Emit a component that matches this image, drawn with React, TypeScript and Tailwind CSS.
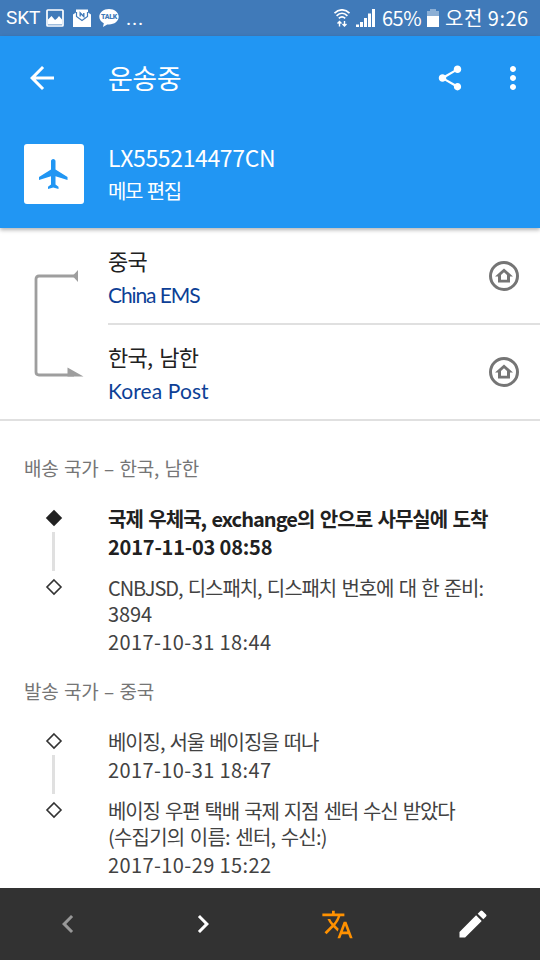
import React from 'react';
import {
  MdArrowBack,
  MdChevronLeft,
  MdChevronRight,
  MdEdit,
  MdFlight,
  MdMoreVert,
  MdShare,
  MdTranslate,
} from 'react-icons/md';

interface Line {
  text: string;
  tracking: string;
}

interface TrackEvent {
  id: number;
  lines: Line[];
  date: string;
  latest?: boolean;
}

interface Section {
  id: number;
  title: string;
  events: TrackEvent[];
}

const sections: Section[] = [
  {
    id: 1,
    title: '배송 국가 – 한국, 남한',
    events: [
      {
        id: 1,
        lines: [{ text: '국제 우체국, exchange의 안으로 사무실에 도착', tracking: 'tracking-[-0.96px]' }],
        date: '2017-11-03 08:58',
        latest: true,
      },
      {
        id: 2,
        lines: [
          { text: 'CNBJSD, 디스패치, 디스패치 번호에 대 한 준비:', tracking: 'tracking-[-1.06px]' },
          { text: '3894', tracking: 'tracking-[-0.1px]' },
        ],
        date: '2017-10-31 18:44',
      },
    ],
  },
  {
    id: 2,
    title: '발송 국가 – 중국',
    events: [
      {
        id: 3,
        lines: [{ text: '베이징, 서울 베이징을 떠나', tracking: 'tracking-[-1.1px]' }],
        date: '2017-10-31 18:47',
      },
      {
        id: 4,
        lines: [
          { text: '베이징 우편 택배 국제 지점 센터 수신 받았다', tracking: 'tracking-[-1.15px]' },
          { text: '(수집기의 이름: 센터, 수신:)', tracking: 'tracking-[-0.8px]' },
        ],
        date: '2017-10-29 15:22',
      },
    ],
  },
];

const countries = [
  { id: 1, name: '중국', carrier: 'China EMS', height: 'h-[97px] border-b-2', tracking: 'tracking-[-1.1px]' },
  { id: 2, name: '한국, 남한', carrier: 'Korea Post', height: 'h-[94px]', tracking: 'tracking-[0.1px]' },
];

const StatusBar: React.FC = () => (
  <div className="flex h-9 shrink-0 items-center justify-between bg-[#407ab9] pl-1.5 pr-3 text-white">
    <div className="flex items-center">
      <span className="w-[40px] whitespace-nowrap font-['Roboto',sans-serif] text-[19px] leading-9 tracking-[-0.1px]">SKT</span>
      <svg width="18" height="18" viewBox="0 0 18 18" fill="none">
        <rect x="1" y="1" width="16" height="16" rx="0.8" stroke="white" strokeWidth="1.7" />
        <path d="M2 15.500V10.500l3.500-3.500 3.500 4 2-1.500 2-2.500 3 3.500v5z" fill="white" />
      </svg>
      <svg className="ml-[9px]" width="18" height="18" viewBox="0 0 18 18">
        <path d="M0 5.500l3-2v-3h12v3l3 2V18H0z" fill="white" />
        <path d="M3.500 3v4.500L9 11.500l5.500-4V3" stroke="#407ab9" strokeWidth="1.200" fill="none" />
        <path d="M7.200 7.500V4l3.600 3.500V4" stroke="#407ab9" strokeWidth="1.400" fill="none" />
      </svg>
      <div className="relative ml-2 h-5 w-5">
        <svg width="20" height="20" viewBox="0 0 20 20">
          <path d="M10 1C4.500 1 .3 4.400.3 8.800c0 2.900 1.800 5.200 4.500 6.500L4 19l4.200-2.600c.6.100 1.200.1 1.800.1 5.500 0 9.700-3.300 9.700-7.700S15.500 1 10 1z" fill="white" />
        </svg>
        <span className="absolute inset-x-0 top-[5px] text-center font-['Roboto',sans-serif] text-[7px] leading-[8px] font-black tracking-[-0.3px] text-[#407ab9]">TALK</span>
      </div>
      <span className="ml-[7px] font-['Roboto',sans-serif] text-xl leading-9 tracking-[0.7px]">...</span>
    </div>
    <div className="flex items-center">
      <svg width="16" height="18" viewBox="0 0 16 18" fill="none" stroke="white" strokeWidth="1.700">
        <path d="M.5 4.200C4.800-.3 11.200-.3 15.500 4.200M2.600 6.800c3.200-3.200 7.600-3.200 10.800 0M4.800 9.300c2-1.900 4.400-1.900 6.400 0" />
        <path d="M5.500 17.500v-4.500M3.500 14.500l2-2 2 2M10.500 12v4.500M8.500 15l2 2 2-2" strokeWidth="1.400" />
      </svg>
      <svg className="ml-1.5" width="19" height="18" viewBox="0 0 19 18" fill="white">
        <path d="M0 15.500h3V18H0zM4 13h3v5H4zM8 9h3v9H8zM12 4.500h3V18h-3zM16 0h3v18h-3z" />
      </svg>
      <span className="ml-[7px] w-[41px] whitespace-nowrap text-[20px] leading-9 tracking-[-0.5px]">65%</span>
      <svg className="ml-[4px]" width="12" height="18" viewBox="0 0 12 18" fill="white">
        <path d="M3 0h6v2h3v5H0V2h3z" opacity=".4" />
        <path d="M0 7h12v11H0z" />
      </svg>
      <span className="ml-[6px] w-[83px] whitespace-nowrap text-[20px] leading-9 tracking-[0.5px]">오전 9:26</span>
    </div>
  </div>
);

const HomeBadge: React.FC = () => (
  <svg width="32" height="32" viewBox="0 0 32 32" fill="none">
    <circle cx="16" cy="16" r="13.500" stroke="#757575" strokeWidth="3" />
    <path d="M16 8.500L7 16.500H10v6h12v-6h3zM16 12.200l3 2.800v4.800h-6v-4.800z" fill="#757575" fillRule="evenodd" />
  </svg>
);

const RouteArrow: React.FC = () => (
  <svg width="50" height="112" viewBox="0 0 50 112" fill="none">
    <path d="M40 8H5Q2 8 2 11V104Q2 107 5 107H40" stroke="#9e9e9e" strokeWidth="2.800" />
    <path d="M38.500 8L44 2v12zM33.500 99.500v8.900H49.500z" fill="#9e9e9e" />
  </svg>
);

const Marker: React.FC<{ filled?: boolean }> = ({ filled }) => (
  <svg width="18" height="18" viewBox="0 0 18 18" className="shrink-0">
    <path
      d={filled ? 'M9 .8L17.200 9 9 17.200.8 9z' : 'M9 2L16 9 9 16 2 9z'}
      fill={filled ? '#212121' : 'none'}
      stroke={filled ? 'none' : '#333'}
      strokeWidth="1.600"
    />
  </svg>
);

const App: React.FC = () => {
  return (
    <div className="flex h-[960px] w-[540px] flex-col overflow-hidden bg-white font-['Noto_Sans_CJK_KR',sans-serif]">
      <StatusBar />

      <header className="z-10 h-48 shrink-0 bg-[#2196f3] text-white shadow-[0_2px_4px_rgba(0,0,0,0.3)]">
        <div className="flex h-[84px] items-center pl-6 pr-[9px]">
          <MdArrowBack size={36} />
          <h1 className="ml-12 flex-1 whitespace-nowrap text-[27px] leading-9 tracking-[-0.5px]">운송중</h1>
          <MdShare size={30} />
          <MdMoreVert size={36} className="ml-[30px]" />
        </div>
        <div className="flex px-6 pt-6">
          <div className="flex h-[60px] w-[60px] items-center justify-center rounded-[3px] bg-white text-[#2196f3]">
            <MdFlight size={36} />
          </div>
          <div className="ml-6 whitespace-nowrap">
            <p className="h-[30px] text-[23px] leading-[27px] tracking-[-0.35px]">LX555214477CN</p>
            <p className="mt-[3px] text-[20px] leading-[28px] tracking-[-1.5px] [word-spacing:2px]">메모 편집</p>
          </div>
        </div>
      </header>

      <section className="flex h-[193px] shrink-0 border-b-2 border-[#e0e0e0]">
        <div className="w-[108px] pl-[34px] pt-10">
          <RouteArrow />
        </div>
        <div className="flex-1">
          {countries.map((country) => (
            <div key={country.id} className={`flex items-center justify-between border-[#e0e0e0] pr-5 ${country.height}`}>
              <div className="whitespace-nowrap pt-0.5">
                <p className="text-[22px] leading-[34px] tracking-[-0.8px] text-[#212121] [word-spacing:3px]">{country.name}</p>
                <p className={`mt-0.5 font-['Lato',sans-serif] text-[21px] leading-8 text-[#0d3f96] ${country.tracking}`}>{country.carrier}</p>
              </div>
              <HomeBadge />
            </div>
          ))}
        </div>
      </section>

      <main className="min-h-0 flex-1 overflow-hidden pt-[34px]">
        {sections.map((section) => (
          <section key={section.id} className="mb-[23px]">
            <h2 className="mb-[25px] h-[26px] whitespace-nowrap pl-6 text-[19px] leading-[26px] tracking-[-0.2px] text-[#757575] [word-spacing:1.4px]">
              {section.title}
            </h2>
            <div className="flex flex-col gap-[15px]">
              {section.events.map((event, index) => (
                <div key={event.id} className="flex">
                  <div className="flex w-[107px] flex-col items-center pt-[3px]">
                    <Marker filled={event.latest} />
                    {index < section.events.length - 1 && <div className="-mb-4 mt-[5px] h-[39px] w-[3px] shrink-0 bg-[#e0e0e0]" />}
                  </div>
                  <div
                    className={`whitespace-nowrap pl-px text-[20px] leading-[26px] ${
                      event.latest ? 'font-bold text-[#212121]' : 'text-[#424242]'
                    }`}
                  >
                    {event.lines.map((line) => (
                      <p key={line.text} className={`h-[26px] [word-spacing:1.8px] ${line.tracking}`}>{line.text}</p>
                    ))}
                    <p className={`mt-0.5 h-[26px] ${event.latest ? 'tracking-[-0.2px]' : 'tracking-[0.4px]'}`}>{event.date}</p>
                  </div>
                </div>
              ))}
            </div>
          </section>
        ))}
      </main>

      <nav className="grid h-[72px] shrink-0 grid-cols-4 place-items-center bg-[#323232] text-white">
        <MdChevronLeft size={36} className="text-[#989898]" />
        <MdChevronRight size={36} />
        <MdTranslate size={33} className="text-[#ff9100]" />
        <MdEdit size={36} />
      </nav>
    </div>
  );
};

export default App;
